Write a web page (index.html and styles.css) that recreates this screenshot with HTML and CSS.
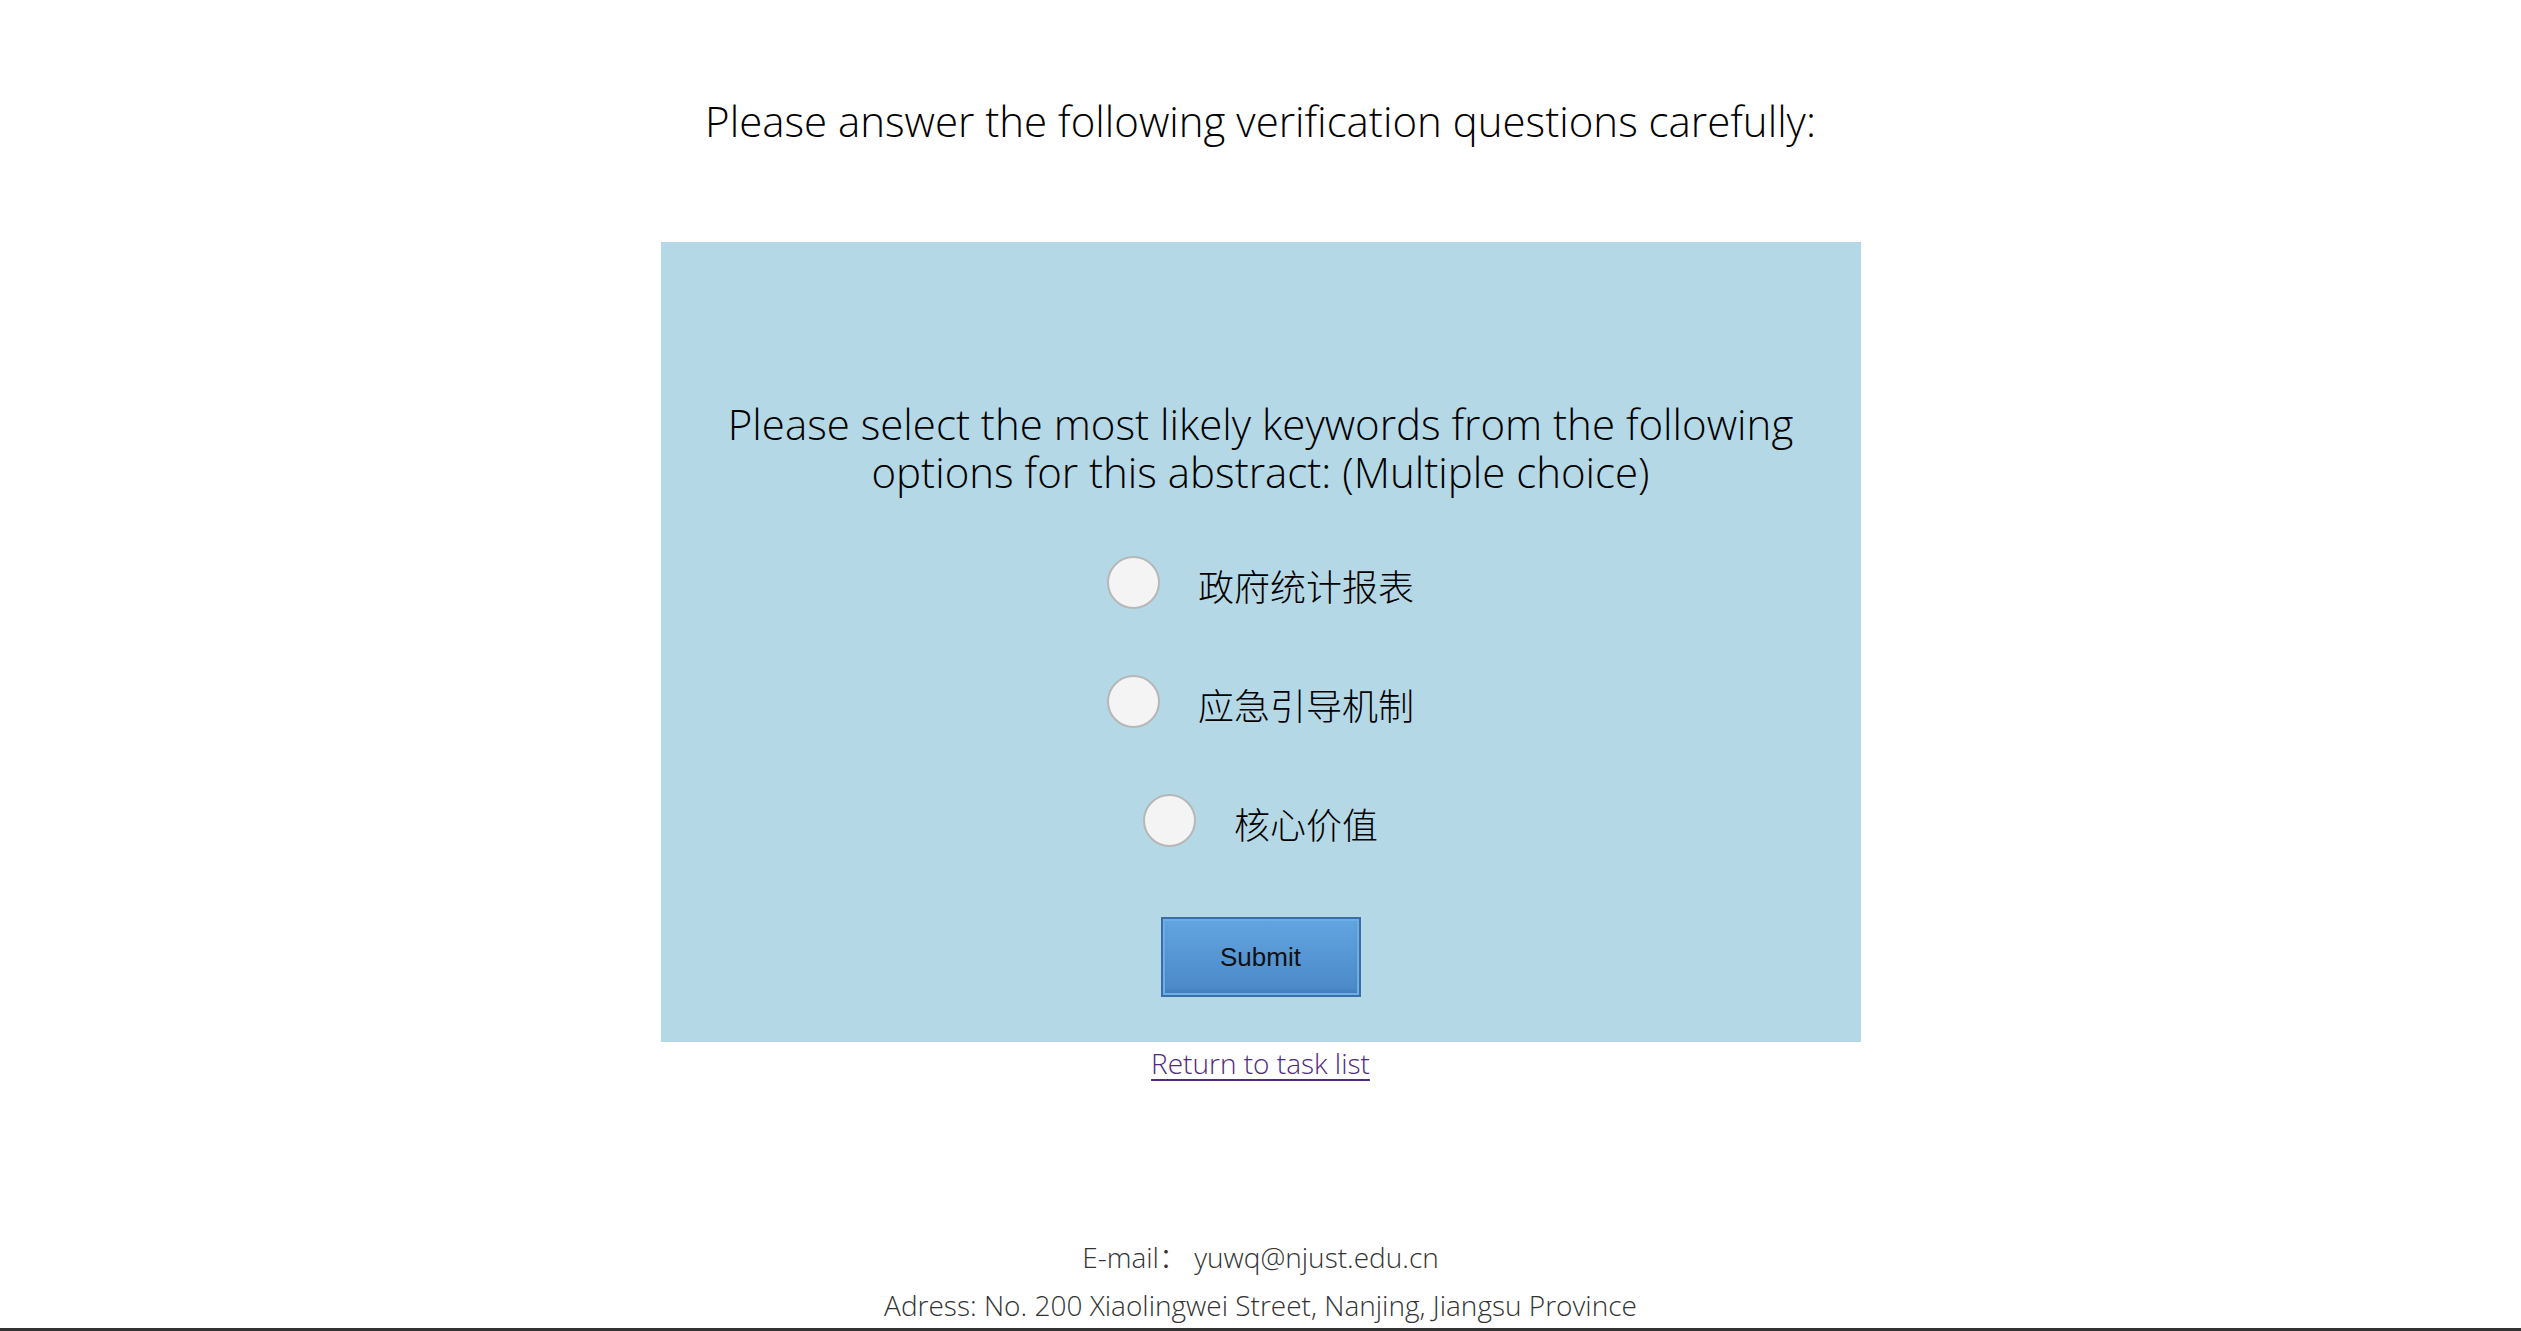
FILE: index.html
```html
<!DOCTYPE html>
<html>
<head>
<meta charset="utf-8">
<title>Verification</title>
<link rel="stylesheet" href="styles.css">
</head>
<body>
<h1 class="page-title">Please answer the following verification questions carefully:</h1>
<form class="quiz-panel">
  <p class="question">Please select the most likely keywords from the following options for this abstract: (Multiple choice)</p>
  <div class="options">
    <label class="option"><input class="radio" type="radio" name="kw" value="1"><span class="option-text">政府统计报表</span></label>
    <label class="option"><input class="radio" type="radio" name="kw" value="2"><span class="option-text">应急引导机制</span></label>
    <label class="option"><input class="radio" type="radio" name="kw" value="3"><span class="option-text">核心价值</span></label>
  </div>
  <button class="submit-btn" type="button">Submit</button>
</form>
<div class="return-row"><a class="return-link" href="#">Return to task list</a></div>
<footer class="site-footer">
  <p class="footer-line">E-mail<span class="fw-colon">：</span>&nbsp;yuwq@njust.edu.cn</p>
  <p class="footer-line footer-last">Adress: No. 200 Xiaolingwei Street, Nanjing, Jiangsu Province</p>
  <div class="footer-bar"></div>
</footer>
</body>
</html>
```

FILE: styles.css
```css
html, body {
  margin: 0;
  padding: 0;
  background: #ffffff;
}

body {
  font-family: "Open Sans", "Noto Sans CJK SC", sans-serif;
  font-weight: 300;
  color: #000;
}

.page-title {
  margin: 92px 0 93px;
  font-size: 42px;
  font-weight: 300;
  line-height: 57px;
  text-align: center;
  color: #000;
}

.quiz-panel {
  box-sizing: border-box;
  width: 1200px;
  height: 800px;
  margin: 0 auto;
  padding-top: 158px;
  background: #b4d8e6;
  display: flex;
  flex-direction: column;
  align-items: center;
}

.question {
  margin: 0;
  padding: 0 40px;
  font-size: 42px;
  line-height: 48px;
  text-align: center;
  color: #000;
}

.options {
  margin-top: 60px;
  display: flex;
  flex-direction: column;
  align-items: center;
  gap: 66px;
}

.option {
  display: flex;
  align-items: center;
  gap: 38px;
  height: 53px;
  cursor: pointer;
}

.radio {
  -webkit-appearance: none;
  appearance: none;
  box-sizing: border-box;
  width: 53px;
  height: 53px;
  margin: 0;
  border: 2px solid #b7b7b7;
  border-radius: 50%;
  background: #f4f4f4;
  flex: none;
}

.option-text {
  margin-top: 4px;
  font-family: "Noto Sans CJK SC", sans-serif;
  font-weight: 300;
  font-size: 36px;
  color: #000;
  white-space: nowrap;
}

.submit-btn {
  box-sizing: border-box;
  margin-top: 70px;
  width: 200px;
  height: 80px;
  border: 2px solid #3b6ea6;
  box-shadow: inset 0 0 0 2px #6eaee6, inset 0 -3px 4px rgba(40, 90, 150, 0.35);
  background: linear-gradient(#62a5e1, #4a87c7);
  font-family: "Liberation Sans", Arial, sans-serif;
  font-size: 26px;
  color: #111;
  cursor: pointer;
}

.return-row {
  margin: 2px 0 0;
  font-size: 28px;
  line-height: 38px;
  text-align: center;
}

.return-link {
  color: #4f2a80;
  text-decoration: underline;
  text-decoration-thickness: 2px;
  text-underline-offset: 5px;
}

.site-footer {
  margin-top: 156px;
  text-align: center;
}

.footer-line {
  margin: 0 0 10px;
  font-size: 28px;
  line-height: 38px;
  color: #333;
}

.fw-colon {
  line-height: 0;
}

.footer-last {
  margin-bottom: 4px;
}

.footer-bar {
  height: 40px;
  background: #333333;
}
```
